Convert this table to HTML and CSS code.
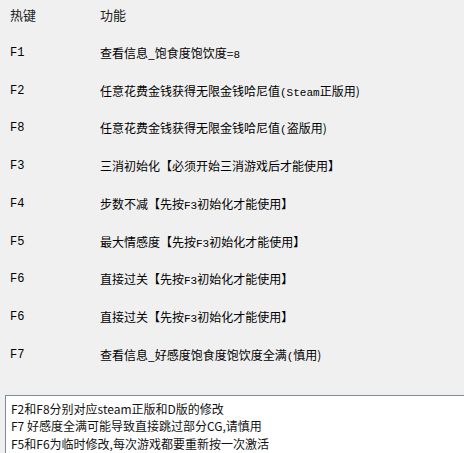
FILE: index.html
```html
<!DOCTYPE html>
<html lang="zh-CN">
<head>
    <meta charset="UTF-8">
    <title>热键</title>
    <link rel="stylesheet" href="styles.css">
</head>
<body>
    <div class="window">
        <div class="key-list">
            <div class="key-row head">
                <span class="key">热键</span>
                <span class="func">功能</span>
            </div>
            <div class="key-row">
                <span class="key mono">F1</span>
                <span class="func">查看信息_饱食度饱饮度=<span class="mono">8</span></span>
            </div>
            <div class="key-row">
                <span class="key mono">F2</span>
                <span class="func">任意花费金钱获得无限金钱哈尼值<span class="mono">(Steam</span>正版用)</span>
            </div>
            <div class="key-row">
                <span class="key mono">F8</span>
                <span class="func">任意花费金钱获得无限金钱哈尼值<span class="mono">(</span>盗版用)</span>
            </div>
            <div class="key-row">
                <span class="key mono">F3</span>
                <span class="func">三消初始化【必须开始三消游戏后才能使用】</span>
            </div>
            <div class="key-row">
                <span class="key mono">F4</span>
                <span class="func">步数不减【先按<span class="mono">F3</span>初始化才能使用】</span>
            </div>
            <div class="key-row">
                <span class="key mono">F5</span>
                <span class="func">最大情感度【先按<span class="mono">F3</span>初始化才能使用】</span>
            </div>
            <div class="key-row">
                <span class="key mono">F6</span>
                <span class="func">直接过关【先按<span class="mono">F3</span>初始化才能使用】</span>
            </div>
            <div class="key-row">
                <span class="key mono">F6</span>
                <span class="func">直接过关【先按<span class="mono">F3</span>初始化才能使用】</span>
            </div>
            <div class="key-row">
                <span class="key mono">F7</span>
                <span class="func">查看信息_好感度饱食度饱饮度全满<span class="mono">(</span>慎用)</span>
            </div>
        </div>

        <div class="notes">
            <div>F2和F8分别对应steam正版和D版的修改</div>
            <div>F7 好感度全满可能导致直接跳过部分CG,请慎用</div>
            <div>F5和F6为临时修改,每次游戏都要重新按一次激活</div>
        </div>
    </div>
</body>
</html>
```

FILE: styles.css
```css
body {
    margin: 0;
    background-color: #f0f0f0;
    font-family: 'Noto Sans CJK SC', sans-serif;
    color: #000;
}

.window {
    display: flex;
    flex-direction: column;
    height: 453px;
    overflow: hidden;
}

.key-list {
    flex: 1;
    display: flex;
    flex-direction: column;
    gap: 23.75px;
    padding: 8px 0 0 10px;
}

.key-row {
    display: grid;
    grid-template-columns: 90px 1fr;
    height: 14px;
    line-height: 14px;
    font-size: 12px;
    white-space: nowrap;
}

.key-row.head {
    font-size: 13px;
    color: #222;
}

.mono {
    font-family: 'Liberation Mono', monospace;
    font-size: 11px;
}

.key.mono {
    font-size: 12px;
}

.notes {
    box-sizing: border-box;
    height: 58px;
    margin-left: 5px;
    padding: 3.5px 0 0 5px;
    background-color: #fff;
    border-top: 1px solid #7f8c9a;
    border-left: 1px solid #7f8c9a;
    font-size: 12px;
    line-height: 17.5px;
    color: #111;
}
```
